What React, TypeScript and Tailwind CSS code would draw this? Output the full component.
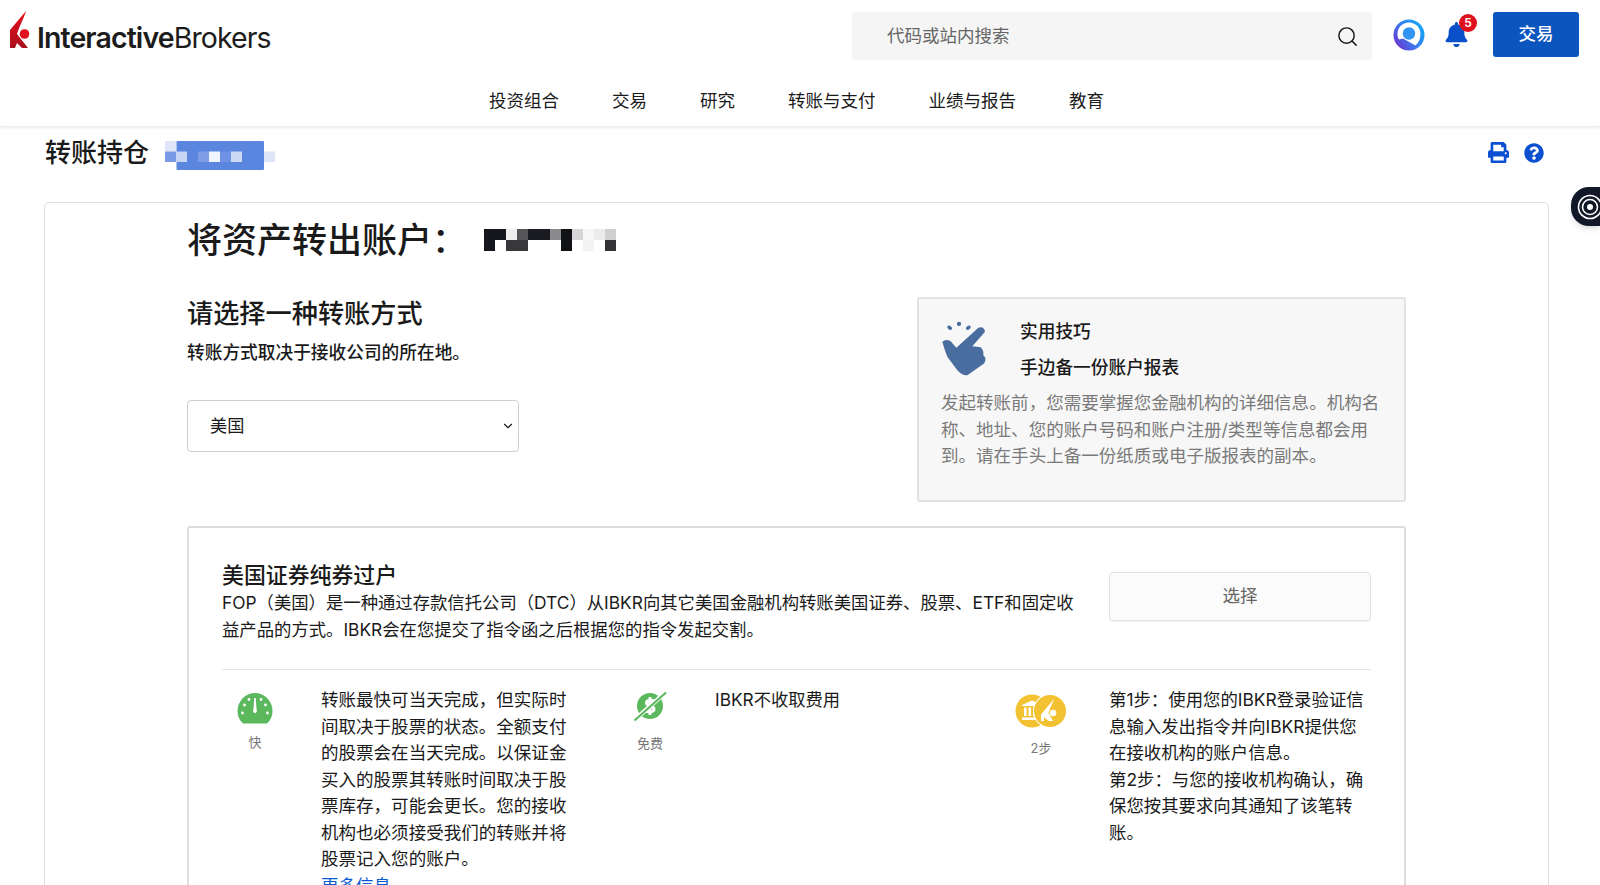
import { ChevronDown, Search } from "lucide-react";
import { FaBell, FaPrint, FaQuestionCircle } from "react-icons/fa";

const FONT = "font-['Inter','Noto_Sans_CJK_SC',sans-serif]";

const NAV_ITEMS = ["投资组合", "交易", "研究", "转账与支付", "业绩与报告", "教育"];

const BLUE_CELLS: [number, number, string][] = [
  [0, 0, "#dfe6f8"],
  [0, 1, "#7a9ae6"],
  [1, 1, "#c9d6f3"],
  [3, 1, "#7e9de6"],
  [4, 1, "#f0f4fd"],
  [5, 1, "#6f92e4"],
  [6, 1, "#ccd8f4"],
  [9, 1, "#dde5f8"],
];

const DARK_ROW_1 = ["#16171c", "#16171c", "#eeeeee", "#555558", "#1a1b20", "#1a1b20", "#8a8a8c", "#111216", "#d6d6d6", "#f6f6f6", "#ececec", "#d0d0d0"];
const DARK_ROW_2 = ["#16171c", "#ffffff", "#38383c", "#38383c", "#ffffff", "#ffffff", "#ffffff", "#111216", "#ffffff", "#f3f3f3", "#ffffff", "#333336"];

function Logo() {
  return (
    <div className="flex items-end">
      <svg width="20" height="38" viewBox="0 0 20 38">
        <defs>
          <linearGradient id="flame" x1="0" y1="0" x2="0" y2="1">
            <stop offset="0" stopColor="#e8101f" />
            <stop offset="1" stopColor="#a80f1c" />
          </linearGradient>
        </defs>
        <path d="M0 37V19L16 0C14 8 9 15 7 23L18 37H12L7 32L5 37Z" fill="url(#flame)" />
        <circle cx="14.5" cy="23" r="4.8" fill="#e0101e" />
      </svg>
      <div className="-mb-[6px] ml-[7px] font-['Inter',sans-serif] text-[28.5px] leading-[34px] tracking-[-0.9px] text-[#1c1c1c]">
        <span className="font-semibold">Interactive</span>
        <span className="font-normal">Brokers</span>
      </div>
    </div>
  );
}

function AssistantIcon() {
  return (
    <svg width="32" height="32" viewBox="0 0 32 32">
      <defs>
        <linearGradient id="ring" x1="0" y1="1" x2="1" y2="0.3">
          <stop offset="0" stopColor="#7a22c8" />
          <stop offset="0.55" stopColor="#3a7df0" />
          <stop offset="1" stopColor="#15a5f5" />
        </linearGradient>
      </defs>
      <circle cx="16" cy="16" r="15.5" fill="url(#ring)" />
      <path d="M16 3.5C9.5 3.5 4.5 8.5 4.5 15C4.5 17 5 19 6 20.5L10 19.5L22.5 26.5C25.5 24 27.5 20 27.5 15C27.5 8.5 22.5 3.5 16 3.5Z" fill="#ffffff" />
      <circle cx="16" cy="14.5" r="6.2" fill="#2f94f3" />
    </svg>
  );
}

function BlueMosaic() {
  return (
    <svg width="110" height="32" viewBox="0 0 110 32">
      <rect x="11.5" y="0" width="87.5" height="29" rx="1" fill="#5a86e0" />
      {BLUE_CELLS.map(([c, r, fill], i) => (
        <rect key={i} x={c * 11} y={r * 10.5} width="11" height="10.5" fill={fill} />
      ))}
    </svg>
  );
}

function DarkMosaic() {
  return (
    <svg width="134" height="22" viewBox="0 0 134 22">
      {DARK_ROW_1.map((fill, i) => (
        <rect key={i} x={i * 11} y="0" width="11" height="11" fill={fill} />
      ))}
      {DARK_ROW_2.map((fill, i) => (
        <rect key={i} x={i * 11} y="11" width="11" height="11" fill={fill} />
      ))}
    </svg>
  );
}

function SnapHand() {
  return (
    <svg width="50" height="57" viewBox="70 85 150 170">
      <path
        d="M80 150Q90 140 105 148L122 168L188 108Q205 102 208 120L170 163L195 166Q205 175 203 190Q215 200 205 215L155 250Q140 252 125 235L95 195Q85 170 80 150Z"
        fill="#4a6d9f"
      />
      <circle cx="130" cy="96" r="6.5" fill="#4a6d9f" />
      <ellipse cx="102" cy="108" rx="8" ry="5.5" transform="rotate(35 102 108)" fill="#4a6d9f" />
      <ellipse cx="158" cy="108" rx="8" ry="5.5" transform="rotate(-35 158 108)" fill="#4a6d9f" />
    </svg>
  );
}

function GaugeIcon() {
  return (
    <svg width="36" height="32" viewBox="0 0 36 32">
      <path d="M6 31.5C2.5 28.5 0.5 24 0.5 19C0.5 9 8.5 1 18 1S35.5 9 35.5 19C35.5 24 33.5 28.5 30 31.5Z" fill="#5cb85c" />
      <path d="M16.4 18L17.2 6H18.8L19.6 18A1.9 1.9 0 1 1 16.4 18Z" fill="#ffffff" />
      <circle cx="5.5" cy="21" r="1.4" fill="#ffffff" />
      <circle cx="7.5" cy="13" r="1.4" fill="#ffffff" />
      <circle cx="12" cy="7.5" r="1.4" fill="#ffffff" />
      <circle cx="24" cy="7.5" r="1.4" fill="#ffffff" />
      <circle cx="28.5" cy="13" r="1.4" fill="#ffffff" />
      <circle cx="30.5" cy="21" r="1.4" fill="#ffffff" />
    </svg>
  );
}

function FreeIcon() {
  return (
    <svg width="34" height="31" viewBox="0 0 34 31">
      <circle cx="17" cy="15" r="13" fill="#5cb85c" />
      <path d="M22 10.5C20 8.5 13.5 8.5 13.5 12C13.5 15.5 21 14.5 21 18C21 21.5 14.5 21.5 12 19.5M17 6V24" fill="none" stroke="#ffffff" strokeWidth="3" />
      <path d="M1 29.5L33 1" stroke="#ffffff" strokeWidth="4.5" />
      <path d="M1.5 29.5L33 1.5" stroke="#5cb85c" strokeWidth="2.2" />
    </svg>
  );
}

function CoinsIcon() {
  return (
    <svg width="52" height="34" viewBox="0 0 52 34">
      <circle cx="17" cy="17" r="16.5" fill="#f3c233" />
      <path d="M7 11L17 6.5L23 9V12H7ZM9 13.5H11.5V22H9ZM13.5 13.5H16V22H13.5ZM18 13.5H20.5V22H18ZM7 23.5H23V26H7Z" fill="#ffffff" />
      <circle cx="35" cy="17" r="17" fill="#ffffff" />
      <circle cx="35" cy="17" r="16" fill="#f3c233" />
      <path d="M26 27V20.5L39 5C37 10.5 34.5 15 33.5 19L38 27H34L29 23.5V27Z" fill="#ffffff" />
      <circle cx="38" cy="19" r="3.2" fill="#ffffff" />
    </svg>
  );
}

function SideWidget() {
  return (
    <div className="absolute right-0 top-[187px] flex h-[39px] w-[29px] items-center overflow-hidden rounded-l-[18px] bg-[#111827] pl-[5px] shadow-md">
      <svg width="28" height="28" viewBox="0 0 28 28" className="shrink-0">
        <circle cx="14" cy="14" r="11.5" fill="none" stroke="#ffffff" strokeWidth="1.6" />
        <circle cx="14" cy="14" r="7.5" fill="none" stroke="#ffffff" strokeWidth="1.6" />
        <circle cx="14" cy="14" r="3" fill="#ffffff" />
      </svg>
    </div>
  );
}

export default function App() {
  return (
    <div className={`relative h-[885px] overflow-hidden bg-white text-[#1a1a1a] ${FONT}`}>
      {/* Top bar */}
      <header className="h-[127px] border-b border-[#ececec] shadow-[0_1px_3px_rgba(0,0,0,0.08)]">
        <div className="flex h-[88px] items-start pl-[10px] pr-[21px]">
          <div className="mt-[11px]">
            <Logo />
          </div>
          <div className="ml-auto mt-[12px] flex h-[48px] w-[520px] items-center justify-between rounded-[3px] bg-[#f5f5f5] pl-[35px] pr-[13px]">
            <span className="text-[17.5px] text-[#666666]">代码或站内搜索</span>
            <Search size={23} strokeWidth={1.5} className="text-[#1a1a1a]" />
          </div>
          <div className="ml-[21px] mt-[19px]">
            <AssistantIcon />
          </div>
          <div className="relative ml-[19px] mt-[22px] text-[#0a50c8]">
            <FaBell size={25} />
            <span className="absolute -right-[8px] -top-[8px] flex h-[18px] w-[18px] items-center justify-center rounded-full bg-[#e0101e] text-[12px] font-semibold text-white">
              5
            </span>
          </div>
          <button className="ml-[24px] mt-[12px] h-[45px] w-[86px] rounded-[3px] bg-[#0b55bf] text-[17.5px] font-medium text-white">
            交易
          </button>
        </div>
        <nav className="-ml-[7px] flex justify-center gap-[53px] text-[17.5px] leading-[26px]">
          {NAV_ITEMS.map((item) => (
            <span key={item}>{item}</span>
          ))}
        </nav>
      </header>

      {/* Page title */}
      <div className="flex h-[75px] items-start justify-between pl-[45px] pr-[56px] pt-[9px]">
        <div className="flex items-start">
          <h1 className="text-[26px] font-medium leading-[34px]">转账持仓</h1>
          <div className="ml-[16px] mt-[5px]">
            <BlueMosaic />
          </div>
        </div>
        <div className="mt-[6px] flex items-center gap-[15px] text-[#0a50d0]">
          <FaPrint size={21} />
          <FaQuestionCircle size={20} />
        </div>
      </div>

      {/* Main card */}
      <main className="ml-[44px] mr-[51px] h-[700px] rounded-[5px] border border-[#dddddd] pl-[142px] pr-[142px]">
        <div className="flex h-[70px] items-center">
          <h2 className="pt-[4px] text-[35px] font-medium leading-[48px]">将资产转出账户：</h2>
          <div className="ml-[17px] mt-[4px]">
            <DarkMosaic />
          </div>
        </div>

        <div className="flex items-start justify-between pt-[24px]">
          <div>
            <h3 className="text-[26.2px] font-medium leading-[34px]">请选择一种转账方式</h3>
            <p className="mt-[9px] text-[17.7px] font-medium leading-[26px]">转账方式取决于接收公司的所在地。</p>
            <div className="mt-[34px] flex h-[52px] w-[332px] items-center justify-between rounded-[4px] border border-[#cfcfcf] pl-[22px] pr-[3px]">
              <span className="text-[17.2px]">美国</span>
              <ChevronDown size={14} strokeWidth={2} />
            </div>
          </div>

          <aside className="flex h-[205px] w-[489px] flex-col rounded-[3px] border-2 border-[#e2e2e2] bg-[#f7f7f7] pl-[20px] pr-[22px] pt-[21px]">
            <div className="flex">
              <SnapHand />
              <div className="ml-[31px] mt-[-1px] text-[17.7px] font-medium leading-[26px]">
                <div>实用技巧</div>
                <div className="mt-[10px]">手边备一份账户报表</div>
              </div>
            </div>
            <p className="ml-[2px] mt-[9px] text-[17.55px] leading-[26.5px] text-[#7a7a7a]">
              发起转账前，您需要掌握您金融机构的详细信息。机构名称、地址、您的账户号码和账户注册/类型等信息都会用到。请在手头上备一份纸质或电子版报表的副本。
            </p>
          </aside>
        </div>

        {/* Transfer method */}
        <section className="mt-[24px] h-[400px] rounded-[3px] border-2 border-[#dddddd] px-[33px] pt-[33px]">
          <div className="flex items-start justify-between border-b border-[#e5e5e5] pb-[26px]">
            <div className="w-[860px]">
              <h4 className="text-[21.9px] font-medium leading-[28px]">美国证券纯券过户</h4>
              <p className="pt-[1px] text-[17.35px] leading-[26.5px]">
                FOP（美国）是一种通过存款信托公司（DTC）从IBKR向其它美国金融机构转账美国证券、股票、ETF和固定收益产品的方式。IBKR会在您提交了指令函之后根据您的指令发起交割。
              </p>
            </div>
            <button className="mt-[11px] h-[49px] w-[262px] rounded-[4px] border border-[#e3e3e3] bg-[#fbfbfb] text-[17.5px] text-[#666666] shadow-[0_1px_1px_rgba(0,0,0,0.05)]">
              选择
            </button>
          </div>

          <div className="grid grid-cols-[393px_392px_1fr] pt-[17px] text-[17.55px] leading-[26.5px]">
            <div className="flex">
              <div className="flex w-[99px] flex-col items-center pr-[33px] pt-[5px]">
                <GaugeIcon />
                <span className="mt-[8px] text-[13px] leading-[20px] text-[#777777]">快</span>
              </div>
              <div className="w-[250px]">
                转账最快可当天完成，但实际时间取决于股票的状态。全额支付的股票会在当天完成。以保证金买入的股票其转账时间取决于股票库存，可能会更长。您的接收机构也必须接受我们的转账并将股票记入您的账户。
                <a className="block text-[#0a5bd3]">更多信息</a>
              </div>
            </div>
            <div className="flex">
              <div className="flex w-[100px] flex-col items-center pr-[30px] pt-[4px]">
                <FreeIcon />
                <span className="mt-[11px] text-[13px] leading-[20px] text-[#777777]">免费</span>
              </div>
              <div className="text-[17.3px]">IBKR不收取费用</div>
            </div>
            <div className="flex">
              <div className="flex w-[102px] flex-col items-center pr-[34px] pt-[7px]">
                <CoinsIcon />
                <span className="mt-[10px] text-[13px] leading-[20px] text-[#777777]">2步</span>
              </div>
              <div className="w-[258px] text-[17.4px]">
                <p>第1步：使用您的IBKR登录验证信息输入发出指令并向IBKR提供您在接收机构的账户信息。</p>
                <p>第2步：与您的接收机构确认，确保您按其要求向其通知了该笔转账。</p>
              </div>
            </div>
          </div>
        </section>
      </main>

      <SideWidget />
    </div>
  );
}
